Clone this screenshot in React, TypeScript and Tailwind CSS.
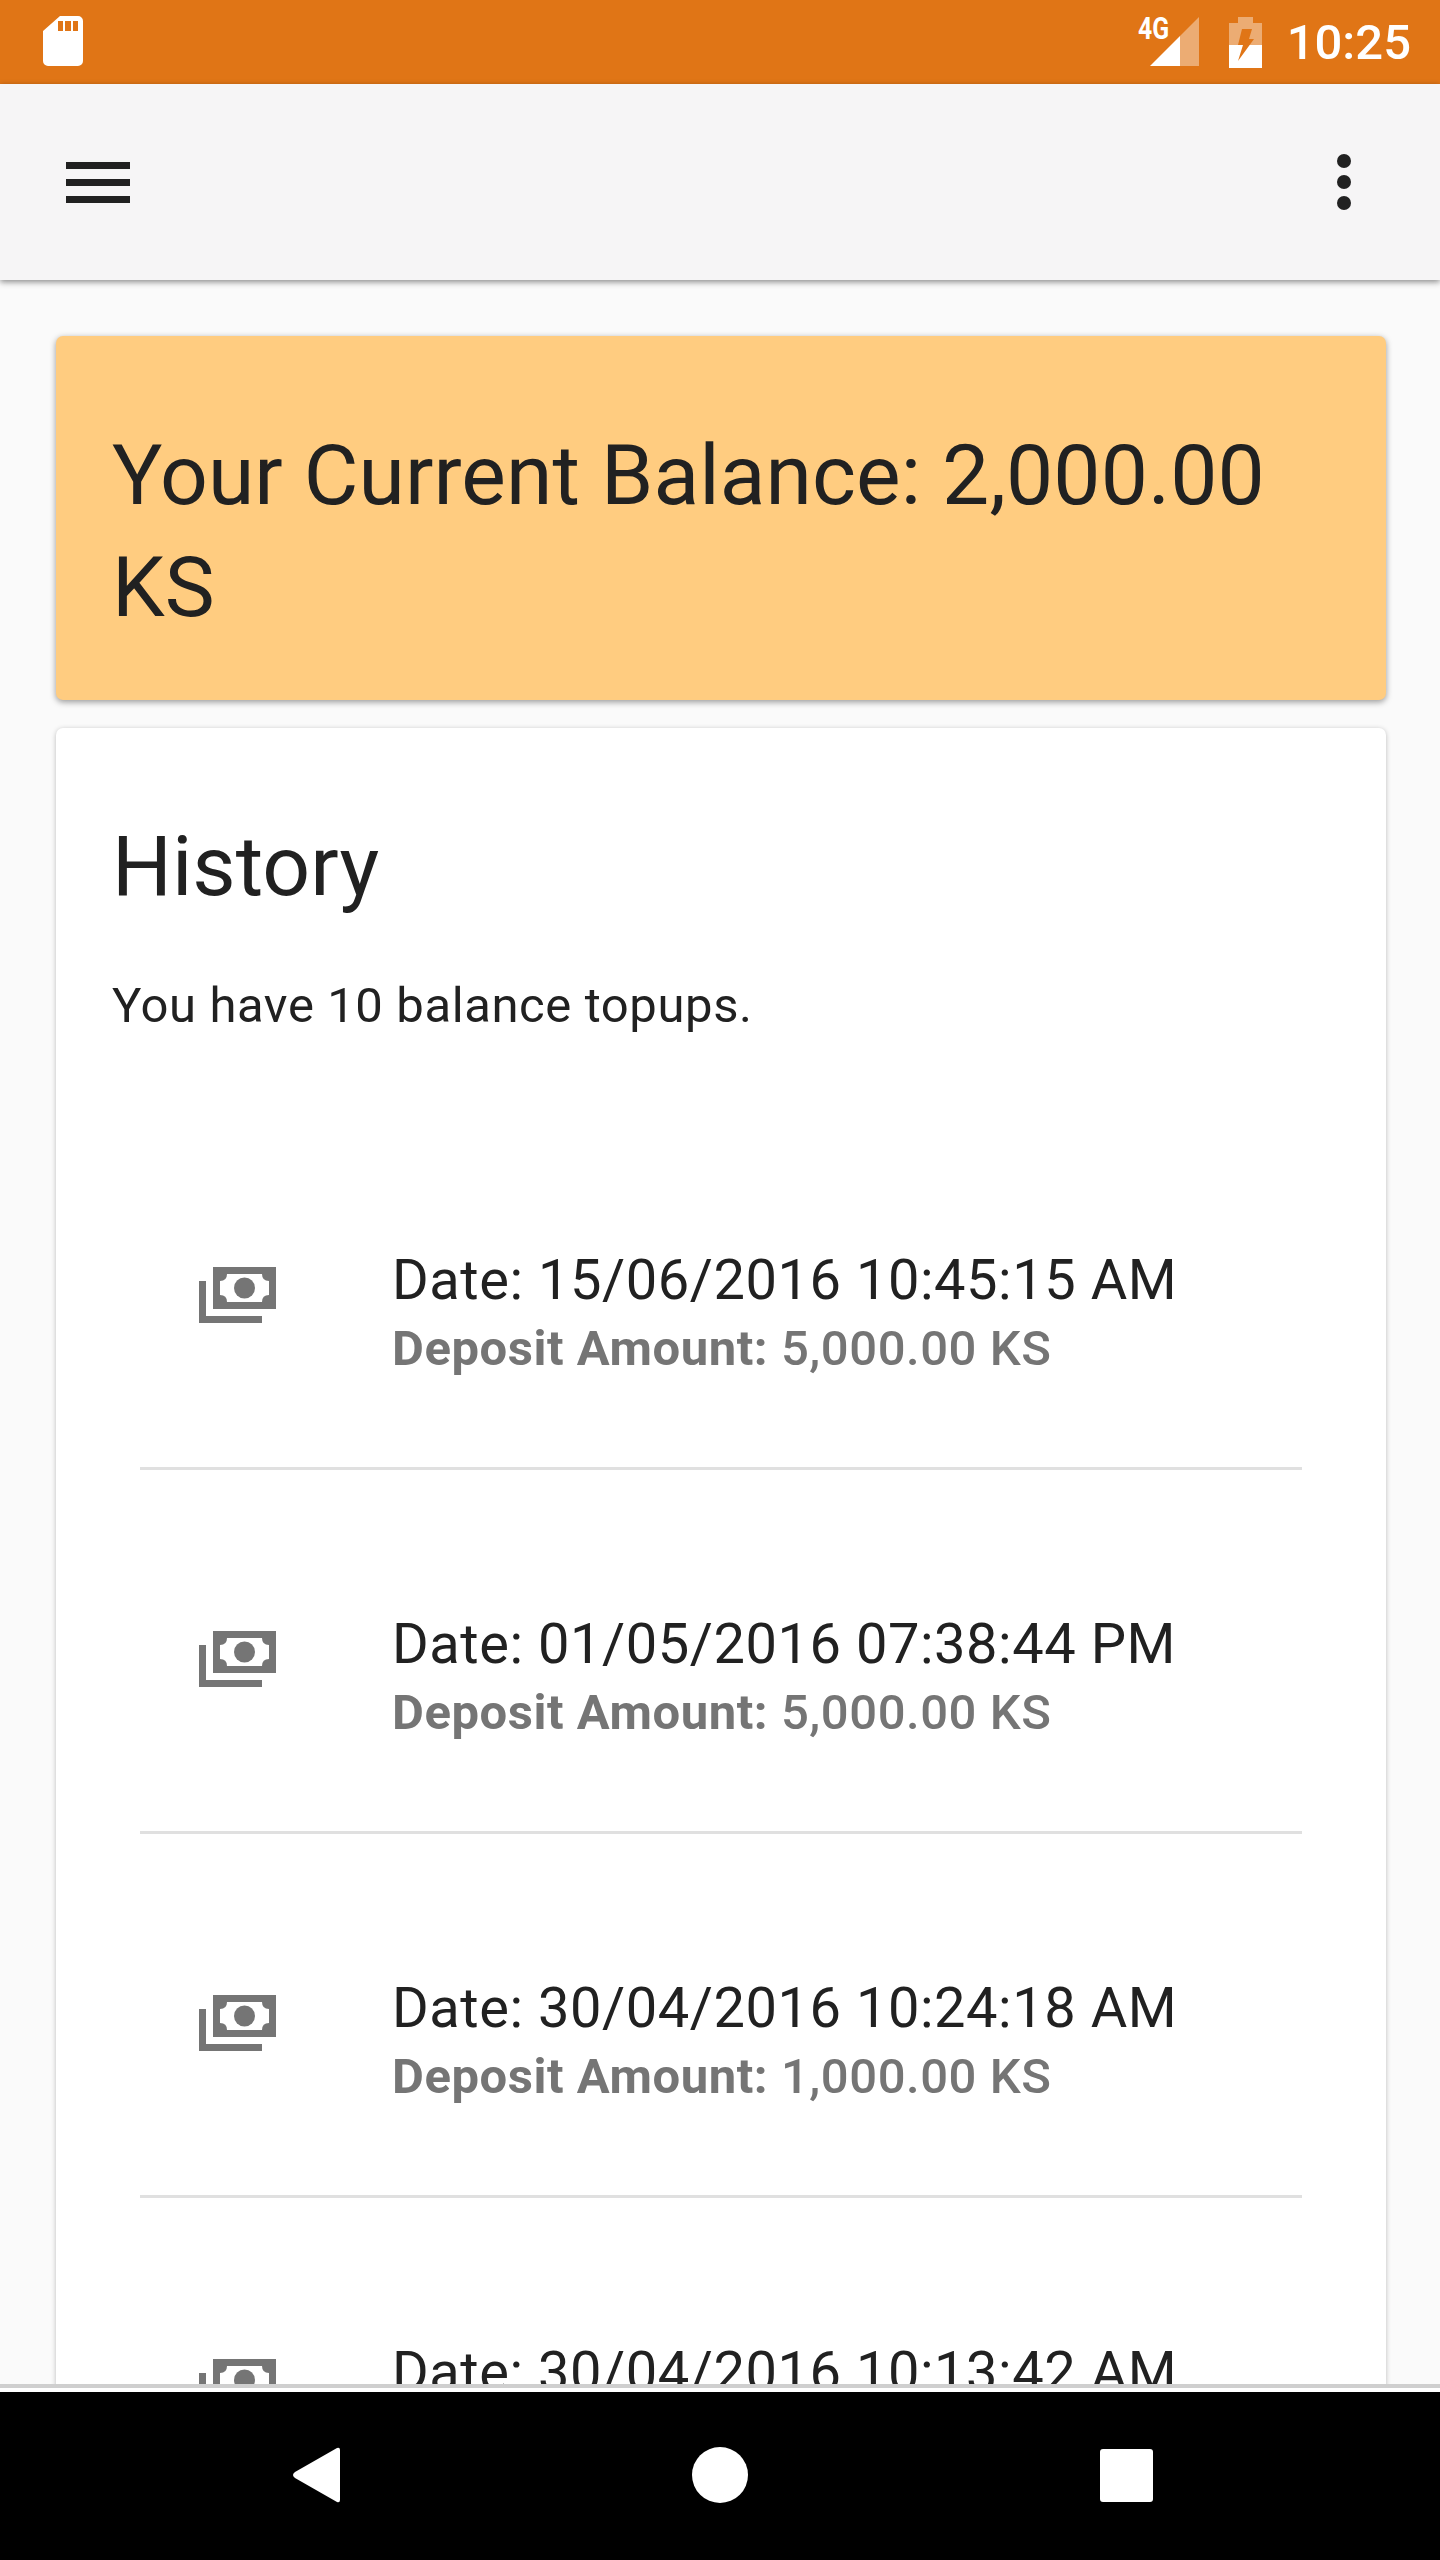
const topups = [
  { date: "15/06/2016 10:45:15 AM", amount: "5,000.00 KS" },
  { date: "01/05/2016 07:38:44 PM", amount: "5,000.00 KS" },
  { date: "30/04/2016 10:24:18 AM", amount: "1,000.00 KS" },
  { date: "30/04/2016 10:13:42 AM", amount: "1,000.00 KS" },
];

function StatusBar() {
  return (
    <div className="flex h-[84px] shrink-0 items-center bg-[#e07516] pl-[43px] pr-[29px] text-white">
      <svg width="40" height="50" viewBox="0 0 40 50" className="mb-[2px]">
        <path
          fillRule="evenodd"
          fill="#fff"
          d="M17 0H35a5 5 0 0 1 5 5V45a5 5 0 0 1-5 5H5a5 5 0 0 1-5-5V15ZM15 5V15H20V5ZM22 5V15H28V5ZM30 5V15H35V5Z"
        />
      </svg>
      <div className="flex-1" />
      <div className="relative h-[50px] w-[61px]">
        <span className="absolute left-0 top-[-4px] origin-left scale-x-[0.8] text-[31px] font-bold leading-[32px]">
          4G
        </span>
        <svg width="49" height="49" viewBox="0 0 49 49" className="absolute left-[12px] top-0">
          <path d="M49 0V49H30V19Z" fill="#fff" fillOpacity="0.4" />
          <path d="M0 49L30 19V49Z" fill="#fff" />
        </svg>
      </div>
      <svg width="33" height="51" viewBox="0 0 33 51" className="ml-[30px]">
        <path d="M9 0H24V6H33V28H0V6H9Z" fill="#fff" fillOpacity="0.4" />
        <path d="M0 28H33V51H0Z" fill="#fff" />
        <path d="M13 12H23L20 22H25L9 44L14 28H9Z" fill="#e07516" />
      </svg>
      <span className="ml-[25px] text-[49px] font-medium leading-none">10:25</span>
    </div>
  );
}

function Toolbar() {
  return (
    <div className="relative z-10 flex h-[196px] shrink-0 items-center justify-between bg-[#f6f5f6] pl-[66px] pr-[89px] shadow-[0_2px_6px_rgba(0,0,0,0.45)]">
      <div className="flex w-[64px] flex-col gap-[10px]">
        <div className="h-[7px] bg-[#212121]" />
        <div className="h-[7px] bg-[#212121]" />
        <div className="h-[7px] bg-[#212121]" />
      </div>
      <div className="flex flex-col gap-[7px]">
        <div className="h-[14px] w-[14px] rounded-full bg-[#212121]" />
        <div className="h-[14px] w-[14px] rounded-full bg-[#212121]" />
        <div className="h-[14px] w-[14px] rounded-full bg-[#212121]" />
      </div>
    </div>
  );
}

function CashIcon() {
  return (
    <svg width="78" height="56" viewBox="0 0 78 56" className="shrink-0">
      <path d="M0 14H7V49H63V56H0Z" fill="#757575" />
      <path
        fillRule="evenodd"
        fill="#757575"
        d="M14 0H77V42H14ZM28 7Q28 14 21 14V28Q28 28 28 35H63Q63 28 70 28V14Q63 14 63 7Z"
      />
      <circle cx="45.500" cy="21" r="10.500" fill="#757575" />
    </svg>
  );
}

function TopupRow({ date, amount }: { date: string; amount: string }) {
  return (
    <div className="ml-[84px] mr-[84px] flex h-[364px] shrink-0 items-start border-b-[3px] border-[#e0e0e0] pl-[59px] pt-[161px]">
      <CashIcon />
      <div className="ml-[115px] mt-[-22px] whitespace-nowrap">
        <p className="text-[56px] leading-[70px] tracking-[0.55px] text-[#212121]">Date: {date}</p>
        <p className="text-[49px] font-medium leading-[68px] tracking-[0.55px] text-[#757575]">
          <b className="font-bold">Deposit Amount:</b> {amount}
        </p>
      </div>
    </div>
  );
}

export default function App() {
  return (
    <div className="flex h-[2560px] w-[1440px] flex-col overflow-hidden bg-[#fafafa] font-['Roboto',sans-serif]">
      <StatusBar />
      <Toolbar />
      <main className="flex min-h-0 flex-1 flex-col gap-[28px] overflow-hidden pl-[56px] pr-[54px] pt-[56px]">
        <section className="shrink-0 rounded-[7px] bg-[#ffcc80] px-[56px] pb-[56px] pt-[84px] shadow-[0_2px_6px_rgba(0,0,0,0.4)]">
          <h1 className="text-[84px] leading-[112px] tracking-[0.1px] text-[#212121]">Your Current Balance: 2,000.00 KS</h1>
        </section>
        <section className="flex-1 rounded-t-[7px] bg-white pt-[97px] shadow-[0_1px_5px_rgba(0,0,0,0.25)]">
          <h2 className="px-[56px] text-[84px] leading-[84px] text-[#212121]">History</h2>
          <p className="mt-[62px] px-[56px] text-[49px] leading-[70px] tracking-[0.6px] text-[#212121]">
            You have 10 balance topups.
          </p>
          <div className="mt-[65px] flex flex-col">
            {topups.map((t) => (
              <TopupRow key={t.date} date={t.date} amount={t.amount} />
            ))}
          </div>
        </section>
      </main>
      <div className="h-[4px] shrink-0 bg-[#cfcfcf]" />
      <div className="h-[4px] shrink-0 bg-white" />
      <nav className="flex h-[168px] shrink-0 items-center bg-black pb-[2px] pl-[292px]">
        <svg width="48" height="56" viewBox="0 0 48 56">
          <path d="M48 3V53Q48 56 45 55L3 31Q-1 28 3 25L45 1Q48 0 48 3Z" fill="#fff" />
        </svg>
        <div className="ml-[352px] h-[56px] w-[56px] rounded-full bg-white" />
        <div className="ml-[352px] h-[53px] w-[53px] rounded-[3px] bg-white" />
      </nav>
    </div>
  );
}
